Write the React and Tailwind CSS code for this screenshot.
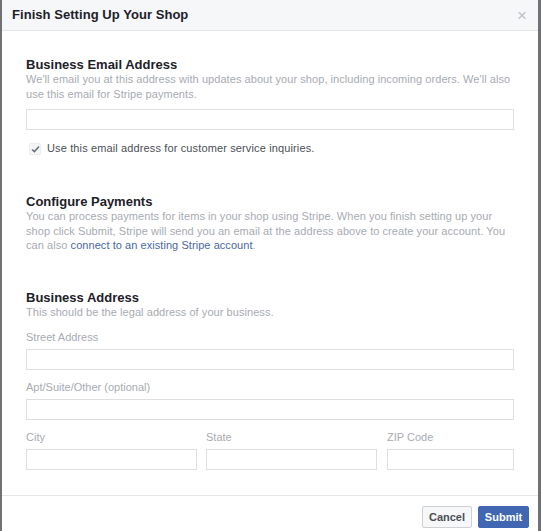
import { useState } from 'react';

const Field = ({ label, className = '' }) => (
  <div className={className}>
    {label && <div className="text-[11px] leading-[15px] text-[#a7abb2] mb-[4px]">{label}</div>}
    <input type="text" className="block w-full h-[21px] border border-[#dddfe2] bg-white outline-none" />
  </div>
);

export default function App() {
  const [useForSupport, setUseForSupport] = useState(true);

  return (
    <div className="w-[541px] h-[531px] bg-[#6f7175] pl-[2px] pr-[3px] font-['Liberation_Sans',Arial,sans-serif]">
      <div className="h-full bg-white flex flex-col">
        {/* header */}
        <div className="h-[31px] shrink-0 bg-[#f6f7f9] border-b border-[#e5e5e5] flex items-center justify-between pl-[10px] pr-[11px]">
          <h2 className="text-[13px] font-bold tracking-[0.05px] text-[#1d2129]">Finish Setting Up Your Shop</h2>
          <span className="text-[#bec2c9] text-[17px] leading-none">×</span>
        </div>

        <div className="flex-1 px-[24px] pt-[26px]">
          {/* email */}
          <h3 className="text-[13px] font-bold leading-[15px] text-[#1d2129]">Business Email Address</h3>
          <p className="text-[11px] leading-[15px] tracking-[0.06px] text-[#a7abb2]">
            We'll email you at this address with updates about your shop, including incoming orders. We'll also use this email for Stripe payments.
          </p>
          <Field className="mt-[7px]" />
          <label className="flex items-center mt-[11px] leading-[15px] text-[11px] tracking-[0.13px] text-[#4b4f56]">
            <span
              onClick={() => setUseForSupport(!useForSupport)}
              className="w-[12px] h-[12px] ml-[3px] mr-[6px] flex items-center justify-center bg-[#f5f6f7] border border-[#ebedf0] rounded-[2px]"
            >
              {useForSupport && (
                <svg width="9" height="8" viewBox="0 0 9 8">
                  <path d="M1 4.5 L3.4 6.6 L8 1.4" fill="none" stroke="#6a6f77" strokeWidth="1.5" />
                </svg>
              )}
            </span>
            Use this email address for customer service inquiries.
          </label>

          {/* payments */}
          <h3 className="mt-[38px] text-[13px] font-bold leading-[15px] text-[#1d2129]">Configure Payments</h3>
          <p className="text-[11px] leading-[14.5px] tracking-[0.06px] text-[#a7abb2]">
            You can process payments for items in your shop using Stripe. When you finish setting up your shop click Submit, Stripe will send you an email at the address above to create your account. You can also{' '}
            <a href="#" className="text-[#4b67a1]">connect to an existing Stripe account</a>.
          </p>

          {/* address */}
          <h3 className="mt-[37px] text-[13px] font-bold leading-[15px] text-[#1d2129]">Business Address</h3>
          <p className="text-[11px] leading-[15px] tracking-[0.06px] text-[#a7abb2]">This should be the legal address of your business.</p>
          <Field label="Street Address" className="mt-[10px]" />
          <Field label="Apt/Suite/Other (optional)" className="mt-[10px]" />
          <div className="flex mt-[10px]">
            <Field label="City" className="w-[171px]" />
            <Field label="State" className="w-[171px] ml-[9px]" />
            <Field label="ZIP Code" className="flex-1 ml-[10px]" />
          </div>
        </div>

        {/* footer */}
        <div className="h-[36px] shrink-0 border-t border-[#e5e5e5] flex items-start justify-end gap-[6px] pt-[10px] pr-[9px]">
          <button className="h-[22px] w-[50px] text-[11px] font-bold text-[#4b4f56] bg-[#f6f7f9] border border-[#ced0d4] rounded-[2px]">Cancel</button>
          <button className="h-[22px] w-[51px] text-[11px] font-bold text-white bg-[#4267b2] border border-[#4267b2] rounded-[2px]">Submit</button>
        </div>
      </div>
    </div>
  );
}
